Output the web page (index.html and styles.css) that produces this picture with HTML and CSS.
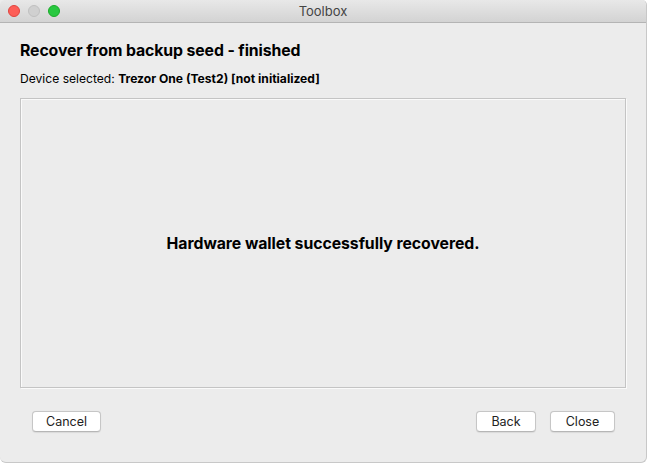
FILE: index.html
```html
<!DOCTYPE html>
<html>
<head>
<meta charset="utf-8">
<link rel="stylesheet" href="styles.css">
</head>
<body>
<div class="window">
  <div class="titlebar">
    <div class="lights">
      <span class="light red"></span>
      <span class="light grey"></span>
      <span class="light green"></span>
    </div>
    <div class="title">Toolbox</div>
  </div>
  <div class="content">
    <h1 class="heading">Recover from backup seed - finished</h1>
    <p class="device">Device selected: <b>Trezor One (Test2) [not initialized]</b></p>
    <div class="panel">
      <p class="message">Hardware wallet successfully recovered.</p>
    </div>
    <div class="buttons">
      <button class="btn btn-cancel">Cancel</button>
      <div class="spacer"></div>
      <button class="btn btn-back">Back</button>
      <button class="btn btn-close">Close</button>
    </div>
  </div>
</div>
</body>
</html>
```
FILE: styles.css
```css
html, body {
  margin: 0;
  padding: 0;
  background: #ffffff;
}
body {
  font-family: Inter, "Liberation Sans", sans-serif;
  color: #000;
}
.window {
  width: 646px;
  height: 462px;
  background: #ececec;
  border-right: 1px solid #c8c8c8;
  border-bottom: 1px solid #c8c8c8;
  border-radius: 0 5px 6px 6px;
  display: flex;
  flex-direction: column;
  overflow: hidden;
}
.titlebar {
  height: 22px;
  flex: none;
  background: linear-gradient(#e8e8e8, #d3d3d3);
  border-bottom: 1px solid #b4b4b4;
  display: flex;
  align-items: center;
  position: relative;
  border-radius: 5px 5px 0 0;
}
.lights {
  display: flex;
  gap: 8px;
  padding-left: 8px;
}
.light {
  width: 12px;
  height: 12px;
  border-radius: 50%;
  box-sizing: border-box;
}
.red { background: #fd5e57; border: 1px solid #e0443e; }
.grey { background: #d0d0d0; border: 1px solid #c0c0c0; }
.green { background: #28c840; border: 1px solid #1aab29; }
.title {
  position: absolute;
  left: 0;
  right: 0;
  text-align: center;
  font-size: 13px;
  color: #444444;
  line-height: 22px;
}
.content {
  flex: 1;
  display: flex;
  flex-direction: column;
  padding: 0 20px 0 20px;
}
.heading {
  margin: 18px 0 0 0;
  font-size: 15.8px;
  font-weight: 700;
  line-height: 20px;
  letter-spacing: -0.1px;
}
.device {
  margin: 11px 0 0 0;
  font-size: 12.1px;
  line-height: 14px;
}
.device b {
  font-weight: 700;
}
.panel {
  margin-top: 12px;
  height: 288px;
  border: 1px solid #c4c4c4;
  box-shadow: inset 1px 1px 0 #fafafa, 1px 1px 0 #fafafa;
  display: flex;
  align-items: center;
  justify-content: center;
}
.message {
  margin: 0;
  font-size: 15.8px;
  font-weight: 700;
  letter-spacing: -0.05px;
}
.buttons {
  display: flex;
  align-items: center;
  margin-top: 23px;
  padding: 0 11px 0 12px;
}
.spacer { flex: 1; }
.btn {
  height: 21px;
  background: #ffffff;
  border: 1px solid #c6c6c6;
  border-bottom-color: #b6b6b6;
  border-radius: 4px;
  font-family: Inter, "Liberation Sans", sans-serif;
  font-size: 12.5px;
  color: #222;
  padding: 0;
  box-shadow: 0 0.5px 1px rgba(0,0,0,0.08);
}
.btn-cancel { width: 69px; }
.btn-back { width: 60px; margin-right: 14px; }
.btn-close { width: 65px; }
```
